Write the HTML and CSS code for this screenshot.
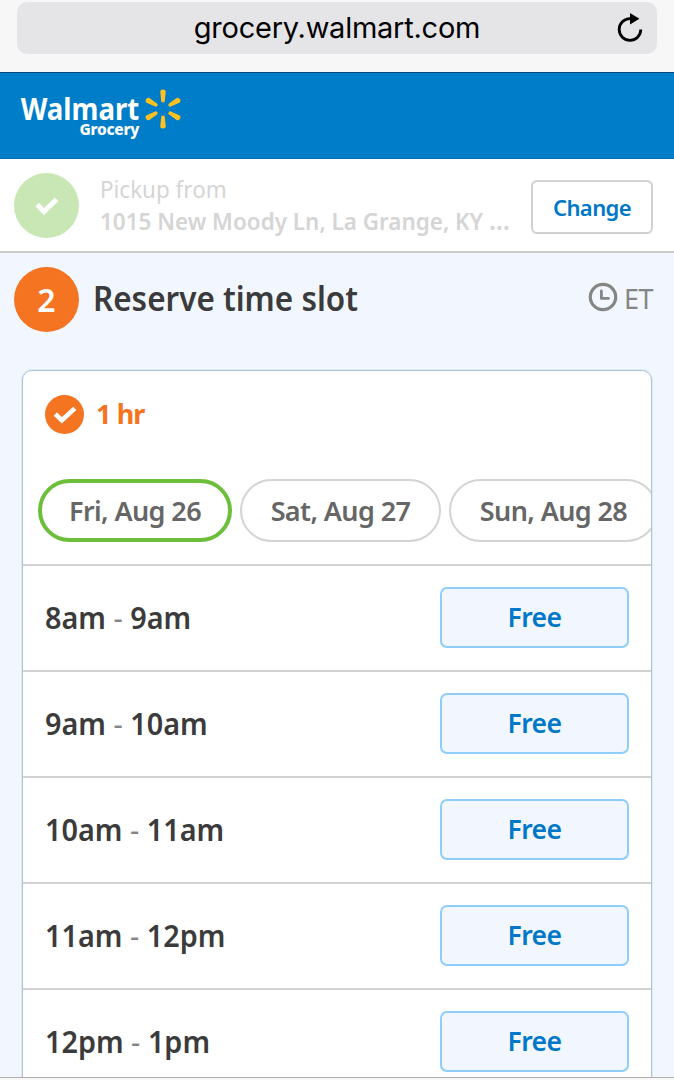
FILE: index.html
```html
<!DOCTYPE html>
<html lang="en">
<head>
  <meta charset="utf-8">
  <title>Walmart Grocery</title>
  <link rel="stylesheet" href="styles.css">
</head>
<body>
  <div class="browser-bar">
    <div class="address">
      <span class="url">grocery.walmart.com</span>
      <svg class="reload" width="26" height="30" viewBox="0 0 26 30">
        <path d="M13 5.7A10.8 10.8 0 1 0 23.8 16.5" fill="none" stroke="#000" stroke-width="2.8"/>
        <path d="M13 0v11.4l9.4-5.7z"/>
      </svg>
    </div>
  </div>

  <header class="header">
    <div class="logo">
      <div class="logo-text">
        <span class="logo-name">Walmart</span>
        <span class="logo-sub">Grocery</span>
      </div>
      <svg class="spark" width="36" height="40" viewBox="-18 -20 36 40" fill="#ffc120">
        <g id="rays">
          <path id="ray" d="M-2.7-17.3q0-2.2 2.7-2.2t2.7 2.2l-.9 9.3q-.2 1.4-1.8 1.4T-1.8-8z"/>
          <use href="#ray" transform="rotate(60)"/>
          <use href="#ray" transform="rotate(120)"/>
          <use href="#ray" transform="rotate(180)"/>
          <use href="#ray" transform="rotate(240)"/>
          <use href="#ray" transform="rotate(300)"/>
        </g>
      </svg>
    </div>
  </header>

  <section class="pickup">
    <div class="step done">
      <svg width="24" height="18" viewBox="0 0 24 18">
        <path d="M2.2 7.6l6.7 7L21.6 2.2" fill="none" stroke="#fff" stroke-width="5"/>
      </svg>
    </div>
    <div class="pickup-info">
      <div class="pickup-label">Pickup from</div>
      <div class="pickup-address">1015 New Moody Ln, La Grange, KY <span class="dots">…</span></div>
    </div>
    <button class="change">Change</button>
  </section>

  <main class="reserve">
    <div class="reserve-header">
      <div class="step">2</div>
      <h1>Reserve time slot</h1>
      <svg class="clock" width="30" height="30" viewBox="0 0 30 30" fill="none" stroke="#858585">
        <circle cx="15" cy="15" r="12.7" stroke-width="3.2"/>
        <path d="M13.4 9v7.4h7" stroke-width="2.8" stroke-linecap="round" stroke-linejoin="round"/>
      </svg>
      <span class="zone">ET</span>
    </div>

    <div class="card">
      <div class="duration">
        <div class="duration-check">
          <svg width="24" height="18" viewBox="0 0 24 18">
            <path d="M2.4 8l6.5 6.3L21.8 2.4" fill="none" stroke="#fff" stroke-width="4.6"/>
          </svg>
        </div>
        <span>1 hr</span>
      </div>
      <div class="days">
        <button class="day fri active">Fri, Aug 26</button>
        <button class="day sat">Sat, Aug 27</button>
        <button class="day sun">Sun, Aug 28</button>
      </div>
      <div class="slot">
        <div class="time">8am <span class="dash">-</span> 9am</div>
        <button class="price">Free</button>
      </div>
      <div class="slot">
        <div class="time">9am <span class="dash">-</span> 10am</div>
        <button class="price">Free</button>
      </div>
      <div class="slot">
        <div class="time">10am <span class="dash">-</span> 11am</div>
        <button class="price">Free</button>
      </div>
      <div class="slot">
        <div class="time">11am <span class="dash">-</span> 12pm</div>
        <button class="price">Free</button>
      </div>
      <div class="slot">
        <div class="time">12pm <span class="dash">-</span> 1pm</div>
        <button class="price">Free</button>
      </div>
    </div>
  </main>
  <div class="toolbar"></div>
</body>
</html>
```
FILE: styles.css
```css
:root {
  --blue: #007dc9;
  --link: #0078c7;
  --orange: #f57421;
  --green: #6dbe3a;
  --line: #cccccc;
  --page-bg: #f2f7ff;
}

* {
  margin: 0;
  padding: 0;
  box-sizing: border-box;
}

body {
  height: 1080px;
  display: flex;
  flex-direction: column;
  overflow: hidden;
  background: #fff;
  color: #3b3b3b;
  font-family: 'Noto Sans', 'Open Sans', sans-serif;
}

button {
  background: #fff;
  font-family: inherit;
  font-weight: 600;
  letter-spacing: -0.6px;
  white-space: nowrap;
}

.browser-bar {
  flex: none;
  height: 73px;
  padding: 2px 17px 0;
  background: #f7f7f7;
  border-bottom: 1px solid #0b4579;
}

.address {
  display: flex;
  align-items: center;
  height: 52px;
  padding-right: 14px;
  border-radius: 10px;
  background: #e5e5e7;
}

.url {
  flex: 1;
  padding-left: 40px;
  text-align: center;
  font: 400 29px/52px Inter, sans-serif;
  letter-spacing: -0.25px;
  color: #000;
}

.header {
  flex: none;
  height: 86px;
  padding: 16px 21px 0;
  background: var(--blue);
  border-bottom: 1px solid #006fb8;
}

.logo {
  display: flex;
  align-items: flex-start;
  gap: 6px;
  color: #fff;
}

.logo-text {
  display: flex;
  flex-direction: column;
  align-items: flex-end;
  width: 118px;
  font-weight: 700;
}

/* condensed to the proportions of the wordmark */
.logo-name {
  font-size: 31px;
  line-height: 38px;
  transform: scaleX(0.89);
  transform-origin: right;
}

.logo-sub {
  margin-top: -4px;
  font-size: 15.5px;
  font-weight: 800;
  line-height: 12px;
  letter-spacing: -0.3px;
}

.pickup {
  flex: none;
  display: flex;
  align-items: flex-start;
  height: 94px;
  padding: 14px 21px 0 14px;
  border-bottom: 2px solid var(--line);
}

.step {
  flex: none;
  display: flex;
  align-items: center;
  justify-content: center;
  width: 65px;
  height: 65px;
  border-radius: 50%;
  background: var(--orange);
  color: #fff;
  font-size: 32px;
  font-weight: 600;
}

.step.done {
  background: #c9e7b5;
}

.pickup-info {
  flex: 1;
  width: 0;
  margin-left: 21px;
  color: #d5d5d5;
  font-size: 24px;
  line-height: 32px;
  white-space: nowrap;
  transform: scaleX(0.935);
  transform-origin: left;
}

.pickup-address {
  font-weight: 600;
}

.dots {
  font-size: 27px;
  line-height: 1;
}

.change {
  width: 122px;
  height: 54px;
  margin-top: 7px;
  border: 2px solid #d0d0d0;
  border-radius: 6px;
  color: var(--link);
  font-size: 22px;
}

.reserve {
  flex: 1;
  min-height: 0;
  overflow: hidden;
  padding: 14px 21px 0 22px;
  background: var(--page-bg);
}

.reserve-header {
  display: flex;
  align-items: center;
  height: 65px;
  margin-left: -8px;
}

h1 {
  flex: 1;
  margin: -4px 0 0 14px;
  font-size: 34px;
  font-weight: 600;
  line-height: 64px;
  white-space: nowrap;
  transform: scaleX(0.925);
  transform-origin: left;
}

.clock {
  margin: -5px 6px 0 0;
}

.zone {
  margin-top: -2px;
  color: #858585;
  font-size: 27px;
  letter-spacing: -0.5px;
}

.card {
  width: 630px;
  height: 800px;
  margin-top: 38px;
  border: 1px solid #a9c6dc;
  border-radius: 10px;
  box-shadow: 0 0 0 1px #dfeaf6;
  background: #fff;
  overflow: hidden;
}

.duration {
  display: flex;
  align-items: center;
  gap: 12px;
  height: 39px;
  margin: 24px 0 0 22px;
  color: var(--orange);
  font-size: 27px;
  font-weight: 700;
  letter-spacing: -0.9px;
}

.duration span {
  margin-top: -2px;
}

.duration-check {
  display: flex;
  align-items: center;
  justify-content: center;
  width: 39px;
  height: 39px;
  border-radius: 50%;
  background: var(--orange);
}

.days {
  display: flex;
  gap: 8px;
  margin-top: 45px;
  padding: 0 0 22px 15px;
}

.day {
  flex: none;
  width: 201px;
  height: 63px;
  border: 2px solid #d4d4d4;
  border-radius: 32px;
  color: #666;
  font-size: 27px;
}

.fri {
  width: 194px;
}

.sun {
  width: 209px;
}

.day.active {
  border: 4px solid var(--green);
}

.slot {
  display: flex;
  align-items: flex-start;
  justify-content: space-between;
  height: 106px;
  padding: 21px 22px 0 22px;
  border-top: 2px solid #d2d2d2;
}

.time {
  font-size: 30px;
  font-weight: 600;
  line-height: 61px;
  transform: scaleX(0.96);
  transform-origin: left;
}

.dash {
  color: #858585;
  font-weight: 400;
}

.price {
  width: 189px;
  height: 61px;
  padding-bottom: 2px;
  border: 2px solid #8fcdfb;
  border-radius: 7px;
  background: var(--page-bg);
  color: var(--link);
  font-size: 26.5px;
}

.toolbar {
  flex: none;
  height: 3px;
  background: #f7f7f7;
  border-top: 1px solid #adadad;
}
```
